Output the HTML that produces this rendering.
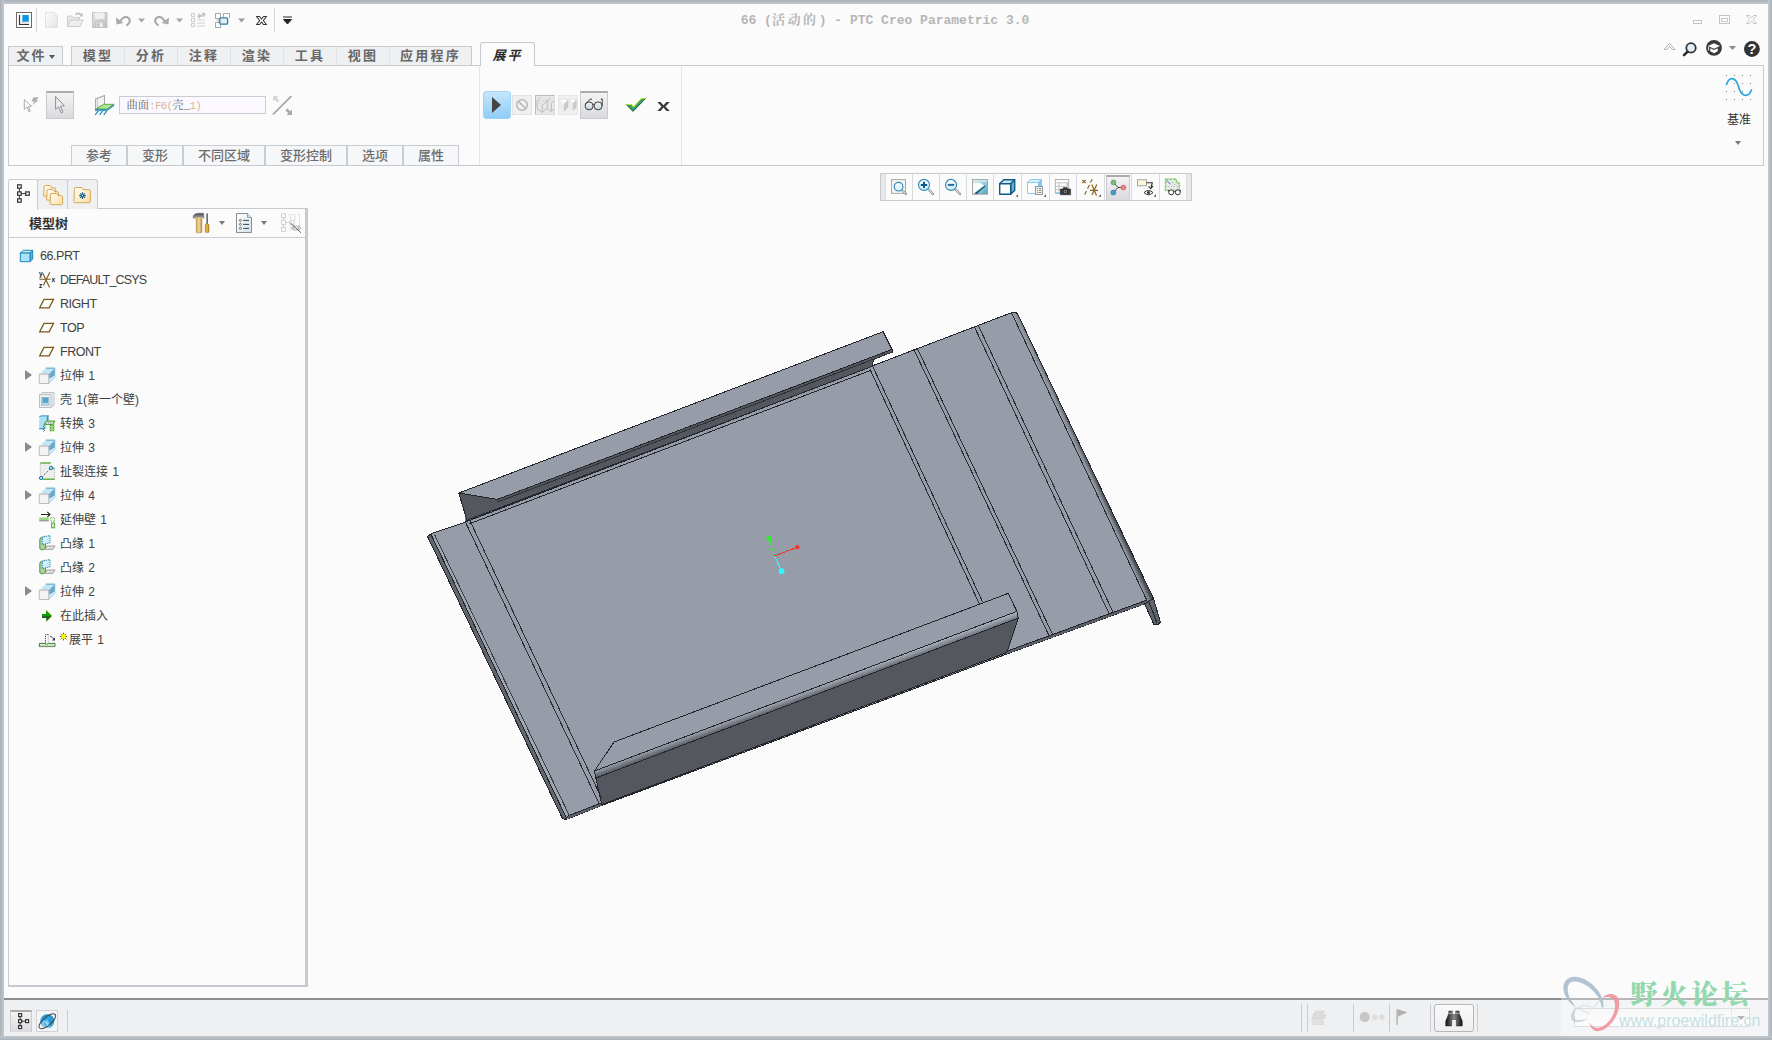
<!DOCTYPE html>
<html lang="zh-CN">
<head>
<meta charset="utf-8">
<title>66 (活动的) - PTC Creo Parametric 3.0</title>
<style>
*{box-sizing:border-box;margin:0;padding:0}
html,body{width:1772px;height:1040px;overflow:hidden;background:#fbfbfb}
body{font-family:"Liberation Sans","Noto Sans CJK SC",sans-serif;font-size:12px;color:#3c3c3c;position:relative}
.abs{position:absolute}
svg{position:absolute;overflow:visible}
/* window frame */
#frame-t{left:0;top:0;width:1772px;height:4px;background:linear-gradient(#a9b1b9,#c3c9ce)}
#frame-l{left:0;top:0;width:4px;height:1040px;background:linear-gradient(90deg,#a9b1b9,#c3c9ce)}
#frame-r{left:1768px;top:0;width:4px;height:1040px;background:linear-gradient(90deg,#c3c9ce,#a9b1b9)}
#frame-b{left:0;top:1036px;width:1772px;height:4px;background:linear-gradient(#c3c9ce,#a9b1b9)}
/* title */
#title{left:735px;top:13px;width:300px;height:16px;line-height:16px;font-family:"Liberation Mono","Noto Serif CJK SC",monospace;font-size:13px;font-weight:700;color:#b6b6b6;white-space:pre;text-align:center}
.vsep{width:1px;background:#c9cdd2}
/* main tabs */
.tab{top:46px;height:20px;background:#eef0f2;border:1px solid #c5cad0;border-bottom:none;font-family:"Noto Sans CJK SC","Liberation Sans",sans-serif;font-size:13px;font-weight:700;color:#676767;letter-spacing:2.2px;padding-left:0;text-align:center;line-height:15px;white-space:nowrap}
.m{border-right-color:#dfe2e6}
.m+.m{border-left-color:#dfe2e6}
#tab-active{left:480px;top:42px;width:55px;height:24px;background:#fbfbfb;border:1px solid #c5cad0;border-bottom:none;border-radius:3px 3px 0 0;font-family:"Noto Sans CJK SC",sans-serif;font-size:13px;font-weight:700;font-style:italic;color:#2a2a2a;letter-spacing:2px;text-align:center;line-height:24px;z-index:3}
/* ribbon */
#ribbon{left:8px;top:65px;width:1756px;height:101px;border:1px solid #c5cad0;background:#fbfbfb}
.subtab{top:145px;height:20px;background:#f6f7f8;border:1px solid #c9cdd2;border-bottom:none;font-family:"Noto Sans CJK SC",sans-serif;font-size:13px;font-weight:500;color:#6c6c6c;text-align:center;line-height:18px;white-space:nowrap}
.pressed{background:linear-gradient(#f3f3f4,#d9dbde);border:1px solid #c9cbce;border-top:2px solid #a9abad}
/* tree */
#tree{left:8px;top:208px;width:300px;height:779px;border:1px solid #c5cad0;border-right:3px solid #c5cad0;border-bottom:2px solid #c5cad0;background:#fbfbfb}
.ttab{top:179px;height:30px;width:30px;border:1px solid #c9cdd2;border-bottom:none;background:#eef0f2;border-radius:3px 3px 0 0}
.row{left:60px;height:24px;line-height:24px;font-size:12.5px;letter-spacing:-0.45px;color:#404040;white-space:nowrap}
.row.cn{word-spacing:1px;font-family:"Liberation Sans","Noto Sans CJK SC",sans-serif;font-size:12px;letter-spacing:0}
.exp{left:25px;width:0;height:0;border-left:7px solid #8a8a8a;border-top:5px solid transparent;border-bottom:5px solid transparent}
/* status */
#status{left:4px;top:998px;width:1764px;height:38px;background:#eef0f2;border-top:2px solid #8c8c8c}
/* view toolbar */
#vtb{left:880px;top:173px;width:312px;height:28px;border:1px solid #c5cad0;background:#fbfbfb}
</style>
</head>
<body>
<!--FRAME-->
<div class="abs" id="frame-t"></div><div class="abs" id="frame-l"></div><div class="abs" id="frame-r"></div><div class="abs" id="frame-b"></div>
<div class="abs" id="title">66 (<span style="letter-spacing:2.6px">活动的</span>) - PTC Creo Parametric 3.0</div>
<svg id="qat" class="abs" style="left:0;top:0" width="700" height="40" viewBox="0 0 700 40">
<defs>
<linearGradient id="gpage" x1="0" y1="0" x2="1" y2="1"><stop offset="0" stop-color="#fdfdfd"/><stop offset="1" stop-color="#e3e3e3"/></linearGradient>
<linearGradient id="gsave" x1="0" y1="0" x2="1" y2="1"><stop offset="0" stop-color="#e6e6e6"/><stop offset="1" stop-color="#bdbdbd"/></linearGradient>
</defs>
<!-- app icon -->
<rect x="16.5" y="12.5" width="15" height="15" fill="#fff" stroke="#6a6a6a"/>
<path d="M19.5,15 V24.5 H29" fill="none" stroke="#333" stroke-width="1.2"/>
<rect x="20.2" y="21.5" width="8.5" height="2.5" fill="#e6e2dc"/>
<rect x="22.3" y="15" width="6.5" height="6.7" fill="#0a96e0"/>
<rect x="36" y="8" width="1" height="24" fill="#d2d5d9"/>
<!-- new -->
<path d="M45.5,12.5 H54 L57.5,16 V27.5 H45.5 Z" fill="url(#gpage)" stroke="#e2e2e2"/>
<path d="M54,12.5 V16 H57.5" fill="#f4f4f4" stroke="#dedede" stroke-width=".8"/>
<!-- open -->
<path d="M67.5,26.5 V16 H72 L73.5,17.5 H79.5 V20" fill="#e9e9e9" stroke="#cfcfcf"/>
<path d="M67.5,26.5 L70.5,20 H83 L80,26.5 Z" fill="#efefef" stroke="#c9c9c9"/>
<path d="M75.5,14.5 Q79,12 81.5,15.5" fill="none" stroke="#bdbdbd" stroke-width="1.6"/>
<path d="M79.5,16.5 H82.8 V13 Z" fill="#bdbdbd"/>
<!-- save -->
<path d="M92.5,12.5 H107 V27.5 H92.5 Z" fill="url(#gsave)" stroke="#c4c4c4"/>
<rect x="95" y="12.5" width="9.5" height="6.5" fill="#f0f0f0"/>
<rect x="96" y="22" width="7.5" height="5.5" fill="#e9e9e9" stroke="#bdbdbd" stroke-width=".8"/>
<rect x="97.3" y="23.3" width="1.8" height="3.4" fill="#b5b5b5"/>
<!-- undo -->
<path d="M119.5,22.5 Q124,14 129,18.5 Q131.500,22 126.500,25.500" fill="none" stroke="#a9a9a9" stroke-width="2.2"/>
<path d="M116,17.5 L116.500,24.500 L123.500,23 Z" fill="#a9a9a9"/>
<path d="M138,18.500 H145 L141.500,22.500 Z" fill="#a6a6a6"/>
<!-- redo -->
<path d="M165.500,22.500 Q161,14 156,18.500 Q153.500,22 158.500,25.500" fill="none" stroke="#a9a9a9" stroke-width="2.2"/>
<path d="M169,17.500 L168.500,24.500 L161.500,23 Z" fill="#a9a9a9"/>
<path d="M176,18.500 H183 L179.500,22.500 Z" fill="#a6a6a6"/>
<!-- regen -->
<g fill="#fdfdfd" stroke="#cdcdcd"><rect x="191.500" y="13.500" width="3" height="3"/><rect x="191.500" y="18.500" width="3" height="3"/><rect x="191.500" y="23.500" width="3" height="3"/></g>
<path d="M197,20 H205 M197,23 H205 M197,26 H205" stroke="#d2d2d2" stroke-width="1"/>
<path d="M197,16 L200,13 V15 H202 V17 H200 V19 Z" fill="#c4c4c4"/>
<path d="M206,14.500 L203,11.500 V13.500 H201.500 V15.500 H203 V17.500 Z" fill="#c4c4c4"/>
<!-- windows -->
<g fill="#fcfcfc" stroke="#a9a9a9"><rect x="215.500" y="13.500" width="5" height="5"/><rect x="215.500" y="22.500" width="5" height="5"/><path d="M223.500,17 V13.500 H229.500 V18" fill="none"/></g>
<path d="M218,18.500 V22.500" stroke="#a9a9a9"/>
<rect x="219.800" y="17.800" width="7.800" height="6.400" rx="1.200" fill="#e4eef5" stroke="#2f7fa6" stroke-width="1.300"/>
<path d="M238,18.500 H245 L241.500,22.500 Z" fill="#9c9c9c"/>
<!-- close x -->
<path d="M256.500,16.500 H259.500 L261.500,19 L263.500,16.500 H266.500 L263.300,20.500 L266.500,24.500 H263.500 L261.500,22 L259.500,24.500 H256.500 L259.700,20.500 Z" fill="#fafafa" stroke="#333" stroke-width="1.100" stroke-linejoin="round"/>
<rect x="274" y="8" width="1" height="24" fill="#d2d5d9"/>
<path d="M283,17 H292 M283.500,19.500 H291.500 L287.500,24 Z" stroke="#222" stroke-width="1" fill="#222"/>
</svg>

<div class="abs tab" style="left:8px;width:55px;letter-spacing:2px;padding-right:8px;padding-left:0">文件<span class="abs" style="left:39.5px;top:8px;width:0;height:0;border-top:4px solid #555;border-left:3.5px solid transparent;border-right:3.5px solid transparent"></span></div>
<div class="abs tab m" style="left:71px;width:54px">模型</div>
<div class="abs tab m" style="left:124px;width:54px">分析</div>
<div class="abs tab m" style="left:177px;width:54px">注释</div>
<div class="abs tab m" style="left:230px;width:54px">渲染</div>
<div class="abs tab m" style="left:283px;width:54px">工具</div>
<div class="abs tab m" style="left:336px;width:54px">视图</div>
<div class="abs tab m" style="left:389px;width:83px;border-right-color:#c5cad0">应用程序</div>
<div class="abs" id="tab-active">展平</div>

<div class="abs" id="ribbon"></div>
<div class="abs vsep" style="left:479px;top:66px;height:99px;background:#e3e5e8"></div>
<div class="abs vsep" style="left:681px;top:66px;height:99px;background:#e3e5e8"></div>
<div class="abs pressed" style="left:46px;top:91px;width:28px;height:28px"></div>
<div class="abs" style="left:119px;top:96px;width:147px;height:18px;border:1px solid #c9cdd2;background:#fbf9ff;font-family:'Liberation Mono','Noto Serif CJK SC',monospace;font-size:11px;line-height:16px;padding:1px 0 0 6.500px;color:#666;white-space:nowrap;letter-spacing:-0.800px"><span style="letter-spacing:0;font-size:11.300px">曲面</span><span style="color:#dcb493">:F6(</span><span style="letter-spacing:0;font-size:11.300px">壳</span><span style="color:#777">_</span><span style="color:#dcb493">1)</span></div>
<div class="abs subtab" style="left:71px;width:56px">参考</div>
<div class="abs subtab" style="left:127px;width:56px">变形</div>
<div class="abs subtab" style="left:183px;width:82px">不同区域</div>
<div class="abs subtab" style="left:265px;width:82px">变形控制</div>
<div class="abs subtab" style="left:347px;width:56px">选项</div>
<div class="abs subtab" style="left:403px;width:56px">属性</div>
<div class="abs" style="left:483px;top:91px;width:28px;height:28px;border-radius:3px;background:linear-gradient(#c5e6fb,#8fcdf6);border:1px solid #9fd3f5"></div>
<div class="abs" style="left:492px;top:97px;width:0;height:0;border-left:9px solid #444;border-top:8px solid transparent;border-bottom:8px solid transparent"></div>
<div class="abs" style="left:512px;top:95px;width:20px;height:20px;background:#f0f0f0;border:1px solid #e2e2e2"></div>
<div class="abs" style="left:535px;top:95px;width:20px;height:20px;background:#e8e8e8;border:1px solid #dcdcdc;border-top-color:#bcbcbc;border-left-color:#bcbcbc"></div>
<div class="abs" style="left:558px;top:95px;width:20px;height:20px;background:#f0f0f0;border:1px solid #e6e6e6"></div>
<div class="abs pressed" style="left:580px;top:91px;width:28px;height:28px"></div>
<div class="abs" style="left:1726px;top:111px;width:26px;height:16px;line-height:16px;font-size:12px;text-align:center;color:#333;font-family:'Noto Sans CJK SC',sans-serif;white-space:nowrap">基准</div>
<div class="abs" style="left:1735px;top:141px;width:0;height:0;border-top:4px solid #777;border-left:3.5px solid transparent;border-right:3.5px solid transparent"></div>

<svg id="ribicons" class="abs" style="left:0;top:0" width="1772" height="170" viewBox="0 0 1772 170">
<defs>
<linearGradient id="glens" x1="0" y1="0" x2="0" y2="1"><stop offset="0" stop-color="#f4f6f7"/><stop offset="1" stop-color="#bcd3de"/></linearGradient>
</defs>
<!-- window controls -->
<rect x="1693.500" y="20.500" width="8" height="3" fill="#fdfdfd" stroke="#c4c4c4"/>
<rect x="1719.500" y="15.500" width="10" height="8" fill="#fdfdfd" stroke="#c4c4c4"/>
<rect x="1721.500" y="18.500" width="6" height="3" fill="#fdfdfd" stroke="#c9c9c9"/>
<path d="M1746.500,15.500 H1749.500 L1751.500,18 L1753.500,15.500 H1756.500 L1753.300,19.500 L1756.500,23.500 H1753.500 L1751.500,21 L1749.500,23.500 H1746.500 L1749.700,19.500 Z" fill="#fdfdfd" stroke="#c6c6c6" stroke-linejoin="round"/>
<!-- help icons -->
<path d="M1664,49.500 L1669.500,43.300 L1675,49.500 H1672.300 L1669.500,46.400 L1666.700,49.500 Z" fill="#fff" stroke="#a9a9a9" stroke-width=".9" stroke-linejoin="round"/>
<circle cx="1691" cy="47.900" r="4.700" fill="#e4eef7" stroke="#333" stroke-width="1.800"/>
<path d="M1687.600,51.600 L1684,55.200" stroke="#2a2a2a" stroke-width="2.600" stroke-linecap="round"/>
<circle cx="1714" cy="47.900" r="7.900" fill="#3a3a3a"/>
<path d="M1708,46 L1714,43.300 L1720,46 L1714,48.700 Z" fill="#fff"/>
<path d="M1710.300,48.300 V51.300 L1714,53.200 L1717.700,51.300 V48.300 L1714,50 Z" fill="#fff"/>
<path d="M1708.600,46.500 V50.500" stroke="#fff" stroke-width=".9"/>
<path d="M1729,46 H1736 L1732.500,50 Z" fill="#8a8a8a"/>
<circle cx="1751.900" cy="49" r="7.900" fill="#333"/>
<text x="1751.900" y="54.300" font-family="Liberation Sans,sans-serif" font-weight="700" font-size="14.500" fill="#fff" text-anchor="middle">?</text>
<!-- datum sine icon -->
<g fill="#777"><circle cx="1726.500" cy="75.500" r=".6"/><circle cx="1734.500" cy="75.500" r=".6"/><circle cx="1742.500" cy="75.500" r=".6"/><circle cx="1750.500" cy="75.500" r=".6"/>
<circle cx="1726.500" cy="83.500" r=".6"/><circle cx="1734.500" cy="83.500" r=".6"/><circle cx="1742.500" cy="83.500" r=".6"/><circle cx="1750.500" cy="83.500" r=".6"/>
<circle cx="1726.500" cy="91.500" r=".6"/><circle cx="1734.500" cy="91.500" r=".6"/><circle cx="1742.500" cy="91.500" r=".6"/><circle cx="1750.500" cy="91.500" r=".6"/>
<circle cx="1726.500" cy="99.500" r=".6"/><circle cx="1734.500" cy="99.500" r=".6"/><circle cx="1742.500" cy="99.500" r=".6"/><circle cx="1750.500" cy="99.500" r=".6"/></g>
<path d="M1726.500,84.500 C1729,76.500 1735,76.500 1738,85 C1741,97 1748,98.500 1751.500,90" fill="none" stroke="#2ea5dc" stroke-width="1.700" stroke-linecap="round"/>
<!-- lightning select -->
<path d="M24.300,99.500 V109.300 L27,107 L29,111.800 L30.300,111.200 L28.400,106.600 L31.400,106.300 Z" fill="#fdfdfd" stroke="#a4a4a4" stroke-width=".9" stroke-linejoin="round"/>
<path d="M33.500,97.200 H39 L36.200,100.300 H38.800 L32.300,104.900 L34.400,101.500 H31.300 Z" fill="#b0b0b0"/>
<!-- cursor -->
<path d="M55.600,96.500 V109.300 L58.600,106.800 L61.200,112.900 L63,112.100 L60.500,106.200 L64.400,105.800 Z" fill="#ececee" stroke="#8e8e8e" stroke-width="1" stroke-linejoin="round"/>
<!-- green plane icon -->
<path d="M95.500,109 V99 L104.500,95.400 V104" fill="#f2f2f2" stroke="#a9a9a9" stroke-width="1.100" stroke-linejoin="round"/>
<path d="M97.500,108 V98.500" stroke="#bdbdbd" stroke-width=".8"/>
<path d="M95.700,108.900 L103.800,104.300 H113.800 L106.900,109.200 Z" fill="#a9e88c" stroke="#5f9e4c" stroke-width=".9" stroke-linejoin="round"/>
<path d="M95.400,109.500 H106.900 L113.800,104.800 V105.800 L107,110.700 H95.400 Z" fill="#a4e3f7" stroke="#0d6f9d" stroke-width=".7"/>
<path d="M98.200,111 L95.200,114.800 M102.600,111 L99.600,114.800 M106.800,111 L103.800,114.800" stroke="#1486bd" stroke-width="1.200"/>
<!-- flip icon -->
<path d="M273,114.500 L291.500,96" stroke="#a2a2a2" stroke-width="1.700"/>
<path d="M273,96 H278.500 L276.700,97.800 L279.500,100.600 L277.600,102.500 L274.800,99.700 L273,101.500 Z" fill="#d6d6d6"/>
<path d="M292,115 H286.500 L288.300,113.200 L285.500,110.400 L287.400,108.500 L290.200,111.300 L292,109.500 Z" fill="#a9a9a9"/>
<!-- stop -->
<circle cx="522" cy="104.900" r="5.300" fill="none" stroke="#b2b2b2" stroke-width="1.400"/>
<path d="M518.300,101.200 L525.700,108.600" stroke="#b2b2b2" stroke-width="1.400"/>
<!-- wire boxes -->
<g fill="none" stroke="#b3b3b3" stroke-width=".9"><path d="M537.200,100.500 V108.400 L541.900,112.600 M537.200,100.500 L540.500,97.200 M542.300,105.400 V112.300 M542.300,105.400 L550.600,97.200 M547.200,100.500 V108.400 L542,112.500 M547.200,108.400 L550.600,111.500 M551.300,103.600 V111.500 L553.700,109.200 M551.300,103.600 L553.700,101"/><path d="M537.200,100.500 L542.300,105.400 M537.200,100.500 H547.200 M544,97.500 L551.300,103.600 M547.200,100.500 H553.500" stroke="#d2d2d2" stroke-width=".7"/></g>
<!-- solid boxes -->
<path d="M559.100,99.300 H568.400 L563.900,103.900 Z M569.200,99.300 H576.600 L572.900,103.300 Z" fill="#fdfdfd"/>
<path d="M559.100,99.300 L563.900,103.900 V111.800 L559.100,107.200 Z M569.200,99.300 L572.900,103.300 V110.900 L569.200,107.200 Z" fill="#ececec"/>
<path d="M563.900,103.900 L568.400,99.300 V107.200 L563.900,111.800 Z M572.900,103.300 L576.600,99.300 V107.200 L572.900,110.900 Z" fill="#cacaca"/>
<path d="M559.100,99 H568.400 M569.200,99 H576.600" stroke="#dcdcdc" stroke-width=".8"/>
<!-- glasses -->
<circle cx="589.100" cy="105.900" r="4" fill="url(#glens)" stroke="#3c3c3c" stroke-width="1"/>
<circle cx="598.100" cy="105.900" r="4" fill="url(#glens)" stroke="#3c3c3c" stroke-width="1"/>
<path d="M593.200,105 Q593.600,104 594,105" fill="none" stroke="#333" stroke-width="1"/>
<path d="M585.300,104.500 L590.500,98.800 L592,99.600 M602.200,105.500 V98.800 L600.800,99.200" fill="none" stroke="#3c3c3c" stroke-width="1"/>
<!-- check -->
<path d="M626.100,104.200 H631.700 L633.400,106.900 L641.200,98.300 H645.700 L633,111.600 Z" fill="#2f9f72"/>
<path d="M626.100,104.500 H631.600 L633.400,107.300 L641.300,98.600 H645.400" fill="none" stroke="#c9f000" stroke-width=".9"/>
<path d="M626.300,104.600 L633,111.400 L645.500,98.500" fill="none" stroke="#0c3d0c" stroke-width=".8"/>
<!-- X -->
<path d="M657.300,102 H660.600 L663.500,105.200 L666.400,102 H669.800 L665.500,106.400 L669.800,111 H666.400 L663.500,107.600 L660.600,111 H657.300 L661.500,106.400 Z" fill="#3a3a3a"/>
</svg>
<div class="abs" id="tree"></div>
<div class="abs" style="left:9px;top:237px;width:296px;height:1px;background:#c9cdd2"></div>
<div class="abs ttab" style="left:8px;background:#fbfbfb;height:31px;z-index:2"></div><div class="abs ttab" style="left:37px;width:31px"></div><div class="abs ttab" style="left:67px;width:31px"></div>
<div class="abs" style="left:29px;top:214px;height:18px;line-height:18px;font-family:'Noto Sans CJK SC',sans-serif;font-weight:700;font-size:13px;color:#333;white-space:nowrap">模型树</div>
<div class="abs row" style="left:40px;top:244px">66.PRT</div>
<div class="abs row" style="left:60px;top:268px;letter-spacing:-0.85px">DEFAULT_CSYS</div>
<div class="abs row" style="left:60px;top:292px">RIGHT</div>
<div class="abs row" style="left:60px;top:316px">TOP</div>
<div class="abs row" style="left:60px;top:340px">FRONT</div>
<div class="abs exp" style="top:370px"></div><div class="abs row cn" style="left:60px;top:364px">拉伸 1</div>
<div class="abs row cn" style="left:60px;top:388px">壳 1(第一个壁)</div>
<div class="abs row cn" style="left:60px;top:412px">转换 3</div>
<div class="abs exp" style="top:442px"></div><div class="abs row cn" style="left:60px;top:436px">拉伸 3</div>
<div class="abs row cn" style="left:60px;top:460px">扯裂连接 1</div>
<div class="abs exp" style="top:490px"></div><div class="abs row cn" style="left:60px;top:484px">拉伸 4</div>
<div class="abs row cn" style="left:60px;top:508px">延伸壁 1</div>
<div class="abs row cn" style="left:60px;top:532px">凸缘 1</div>
<div class="abs row cn" style="left:60px;top:556px">凸缘 2</div>
<div class="abs exp" style="top:586px"></div><div class="abs row cn" style="left:60px;top:580px">拉伸 2</div>
<div class="abs row cn" style="left:60px;top:604px">在此插入</div>
<div class="abs row cn" style="left:69px;top:628px">展平 1</div>
<div class="abs" style="left:219px;top:221px;width:0;height:0;border-top:4px solid #777;border-left:3.5px solid transparent;border-right:3.5px solid transparent"></div>
<div class="abs" style="left:261px;top:221px;width:0;height:0;border-top:4px solid #777;border-left:3.5px solid transparent;border-right:3.5px solid transparent"></div>

<div class="abs" id="vtb"></div>
<div class="abs" style="left:881px;top:174px;width:5px;height:26px;background:#e6e8ea"></div><div class="abs" style="left:1186px;top:174px;width:5px;height:26px;background:#e6e8ea"></div>
<div class="abs vsep" style="left:885px;top:174px;height:26px;background:#d9dcdf"></div><div class="abs vsep" style="left:912px;top:174px;height:26px;background:#d9dcdf"></div><div class="abs vsep" style="left:939px;top:174px;height:26px;background:#d9dcdf"></div><div class="abs vsep" style="left:966px;top:174px;height:26px;background:#d9dcdf"></div><div class="abs vsep" style="left:993px;top:174px;height:26px;background:#d9dcdf"></div><div class="abs vsep" style="left:1021px;top:174px;height:26px;background:#d9dcdf"></div><div class="abs vsep" style="left:1049px;top:174px;height:26px;background:#d9dcdf"></div><div class="abs vsep" style="left:1076px;top:174px;height:26px;background:#d9dcdf"></div><div class="abs vsep" style="left:1104px;top:174px;height:26px;background:#d9dcdf"></div><div class="abs vsep" style="left:1131px;top:174px;height:26px;background:#d9dcdf"></div><div class="abs vsep" style="left:1159px;top:174px;height:26px;background:#d9dcdf"></div><div class="abs vsep" style="left:1186px;top:174px;height:26px;background:#d9dcdf"></div>
<div class="abs pressed" style="left:1106px;top:175px;width:24px;height:25px;border-bottom:none"></div>
<svg id="vtbicons" class="abs" style="left:870px;top:170px" width="330" height="36" viewBox="870 170 330 36">
<defs>
<linearGradient id="gteal" x1="0" y1="0" x2="1" y2="1"><stop offset="0" stop-color="#e8f6fa"/><stop offset="1" stop-color="#4fa6c0"/></linearGradient>
<linearGradient id="glens2" x1="0" y1="0" x2="0" y2="1"><stop offset="0" stop-color="#ffffff"/><stop offset="1" stop-color="#cfeaf6"/></linearGradient>
</defs>
<!-- refit -->
<rect x="891.500" y="179.600" width="14" height="13.800" fill="#f3f3f3" stroke="#a9a9a9" stroke-width="1"/>
<path d="M901.800,190 L906,194" stroke="#9a9a9a" stroke-width="2.400" stroke-linecap="round"/><path d="M901.800,190 L905.700,193.700" stroke="#e2e2e2" stroke-width="1"/>
<circle cx="898.600" cy="186.700" r="4.300" fill="url(#glens2)" stroke="#2a8ab5" stroke-width="1.100"/>
<!-- zoom in -->
<path d="M928.200,189.200 L933,194" stroke="#9a9a9a" stroke-width="2.400" stroke-linecap="round"/><path d="M928.200,189.200 L932.700,193.700" stroke="#e6e6e6" stroke-width="1"/>
<circle cx="924" cy="184.900" r="5.500" fill="url(#glens2)" stroke="#2a8ab5" stroke-width="1.100"/>
<path d="M920.800,184.900 H927.200 M924,181.700 V188.100" stroke="#0b5c8c" stroke-width="2"/>
<!-- zoom out -->
<path d="M955.200,189.200 L960,194" stroke="#9a9a9a" stroke-width="2.400" stroke-linecap="round"/><path d="M955.200,189.200 L959.700,193.700" stroke="#e6e6e6" stroke-width="1"/>
<circle cx="951" cy="184.900" r="5.500" fill="url(#glens2)" stroke="#2a8ab5" stroke-width="1.100"/>
<path d="M947.800,184.900 H954.200" stroke="#1b76a8" stroke-width="2"/>
<!-- repaint -->
<rect x="972.500" y="179.600" width="15" height="14.600" fill="url(#gteal)" stroke="#a4a4a4" stroke-width="1"/>
<path d="M973,183.500 Q980,181 984.500,186 L973,193.700 Z" fill="#f6fbfc"/>
<path d="M973,180.100 H987 V181.600 H973 Z" fill="#cfeaf2"/>
<path d="M975.500,193.600 L985,186" stroke="#0e5678" stroke-width="1.400"/><path d="M975,193.800 L979,192 L977.500,193.800 Z" fill="#0e5678"/>
<!-- cube -->
<g stroke="#0d5c88" stroke-width="1.400" stroke-linejoin="round"><path d="M999.700,183.800 L1003.700,179.700 H1014.700 L1010.700,183.800 Z" fill="#c9e9f5"/><path d="M1010.700,183.800 L1014.700,179.700 V190.300 L1010.700,194.300 Z" fill="#6fb2d0"/><rect x="999.700" y="183.800" width="11" height="10.500" fill="#fdfdfd"/></g>
<path d="M1018,194.300 V196.800 H1015.500 Z" fill="#555"/>
<!-- cube+doc -->
<g stroke="#8ccbea" stroke-width="1" stroke-linejoin="round"><path d="M1027.500,182.500 L1030.500,179.500 H1041.500 L1038.500,182.500 Z" fill="#d8f0fa"/><path d="M1038.500,182.500 L1041.500,179.500 V190.500 L1038.500,193.500 Z" fill="#7fc4e6"/><rect x="1027.500" y="182.500" width="11" height="11" fill="#fdfdfd"/></g>
<rect x="1035.500" y="186.500" width="7" height="8" fill="#f2f2f2" stroke="#8e8e8e" stroke-width=".9"/>
<path d="M1037,188.500 h1 M1037,190.500 h1 M1037,192.500 h1 M1038.800,188.500 h2.400 M1038.800,190.500 h2.400 M1038.800,192.500 h2.400" stroke="#666" stroke-width=".8"/>
<path d="M1046,194.300 V196.800 H1043.500 Z" fill="#555"/>
<!-- table+camera -->
<rect x="1055.300" y="179.600" width="13.400" height="13.800" fill="#fdfdfd" stroke="#a9a9a9" stroke-width=".9"/>
<path d="M1055.300,182.800 H1068.700 M1055.300,186.300 H1068.700 M1055.300,189.800 H1062 M1059,182.800 V193.400" stroke="#b4b4b4" stroke-width=".8"/>
<path d="M1067.200,182.800 V186.300" stroke="#8ccbea" stroke-width="1.400"/><path d="M1055.300,192.800 H1061" stroke="#8ccbea" stroke-width="1.300"/>
<path d="M1060.300,189 H1062.600 L1063.400,187.600 H1067.200 L1068,189 H1070.600 V194.800 H1060.300 Z" fill="#3a3a3a" stroke="#222" stroke-width=".5"/>
<circle cx="1065.300" cy="191.600" r="2.300" fill="#8a8a8a" stroke="#111" stroke-width=".8"/><circle cx="1065.300" cy="191.600" r=".9" fill="#333"/>
<!-- datum display -->
<g stroke="#8a6420" stroke-width="1.200" fill="none"><path d="M1082.300,179.800 L1085.700,183.200 M1085.700,179.800 L1082.300,183.200 M1092.300,179.300 L1090.300,182.500 M1089.500,185 L1087.500,188.500 M1086.500,191 L1084.700,194.500"/><path d="M1090,190.300 H1098 M1091.800,184.500 L1096.500,195.500 M1096.800,184.500 L1092,195"/></g>
<path d="M1101,194.300 V196.800 H1098.500 Z" fill="#555"/>
<!-- spin center -->
<path d="M1113.500,182.400 L1118,187.500 L1113.300,192.600 M1118,187.500 H1123.400" fill="none" stroke="#444" stroke-width="1"/>
<circle cx="1113.500" cy="182.400" r="2.500" fill="#7fb77f" stroke="#5d9a5d" stroke-width=".6"/>
<circle cx="1123.400" cy="187.500" r="2.500" fill="#ea7f7f" stroke="#cf5f5f" stroke-width=".6"/>
<circle cx="1113.300" cy="192.600" r="2.500" fill="#4a96c4" stroke="#2f7aa8" stroke-width=".6"/>
<!-- annotation display -->
<rect x="1137.500" y="179.800" width="9" height="6" fill="#fdf5dc" stroke="#9a9a9a" stroke-width=".9"/>
<path d="M1146.500,182.700 H1152.300 L1151,187.500" fill="none" stroke="#333" stroke-width="1.100"/><path d="M1148.500,186.300 L1150.800,188.600 L1153,185.800" fill="none" stroke="#333" stroke-width="1.100"/>
<path d="M1144,192.600 Q1148.500,188.300 1153,192.600 Q1148.500,196.900 1144,192.600 Z" fill="#fdfdfd" stroke="#333" stroke-width="1"/><circle cx="1148.500" cy="192.600" r="1.500" fill="#333"/>
<path d="M1156,194.300 V196.800 H1153.500 Z" fill="#555"/>
<!-- appearance/glasses -->
<path d="M1165.500,179.300 H1176.500 V183 H1179.300 V190.500 H1165.500 Z" fill="#e9e9e9" stroke="#7fcf5f" stroke-width="1.500" stroke-linejoin="round" stroke-dasharray="3,.8"/>
<path d="M1166.500,180.300 L1170.500,184.300" stroke="#1b76a8" stroke-width="1"/>
<g fill="#3f8f2f"><circle cx="1169" cy="186.500" r=".45"/><circle cx="1171.500" cy="186.500" r=".45"/><circle cx="1174" cy="186.500" r=".45"/><circle cx="1172.500" cy="182.500" r=".45"/><circle cx="1175" cy="184.500" r=".45"/><circle cx="1177" cy="186.500" r=".45"/></g>
<circle cx="1171.200" cy="192.300" r="2.500" fill="#fdfdfd" stroke="#333" stroke-width="1"/><circle cx="1177.800" cy="192.300" r="2.500" fill="#fdfdfd" stroke="#333" stroke-width="1"/>
<path d="M1173.700,191.800 Q1174.500,191 1175.300,191.800 M1168.700,191.500 L1168.300,190 M1180.300,191.500 L1180.700,190" fill="none" stroke="#333" stroke-width=".9"/>
</svg>
<svg id="model" class="abs" style="left:0;top:0" width="1772" height="1040" viewBox="0 0 1772 1040" shape-rendering="crispEdges">
<defs>
<linearGradient id="gbend" gradientUnits="userSpaceOnUse" x1="800" y1="693" x2="802.6" y2="700"><stop offset="0" stop-color="#a9afba"/><stop offset="1" stop-color="#5d6168"/></linearGradient>
<linearGradient id="gredge" gradientUnits="userSpaceOnUse" x1="1076.2" y1="450" x2="1081.6" y2="447.5"><stop offset="0" stop-color="#969ca8"/><stop offset=".35" stop-color="#8d939e"/><stop offset="1" stop-color="#474b52"/></linearGradient>
</defs>
<g stroke="#23252a" stroke-width="1" stroke-linejoin="round">
<path d="M465,523.5 L465,512 L872,357 L873.5,367 Z" fill="#7a7f89" stroke="none"/>
<!-- main plate -->
<path d="M427.5,536.5 L431,533.8 L465.6,522 L872.5,365.8 L1011.5,312.7 L1014,312 L1016.3,312.7 L1018,314.8 L1153.5,598.5 L1160.4,622 L1158.5,624.3 L1154,624.6 L1144.5,603.8 L1006.8,654 L601.7,805.5 L568,818.8 L564.5,819.4 L562,817.5 Z" fill="#969ca8"/>
<!-- left thickness strip -->
<path d="M427.5,536.5 L431,533.8 L434.6,534.7 L569.8,816.6 L568,818.8 L564.5,819.4 L562,817.5 Z" fill="#a0a6b2" stroke="none"/>
<path d="M427.5,536.5 L431,533.8 L431.6,535.6 L566.6,818.4 L564.5,819.4 L562,817.5 Z" fill="#62666e"/>
<!-- bottom thin edges -->
<path d="M568,818.8 L601.7,805.5 L600.8,803.2 L567,816.3 Z" fill="#5c6068" stroke="none"/><path d="M567,816.3 L600.8,803.2" fill="none"/>
<path d="M1006.8,654 L1144.5,603.8 L1153.5,598.5 L1152.5,596.600 L1143.8,601.200 L1006.3,651.400 Z" fill="#5c6068" stroke="none"/><path d="M1006.3,651.400 L1143.8,601.200 L1152.5,596.600" fill="none"/>
<!-- right rounded edge -->
<path d="M1011.5,312.7 L1014,312 L1016.3,312.7 L1018,314.800 L1153.5,598.5 L1147,600.7 Z" fill="url(#gredge)" stroke="none"/>
<path d="M1011.5,312.7 L1014,312 L1016.3,312.7 L1018,314.800 L1153.500,598.500" fill="none"/>
<!-- hook -->
<path d="M1153.5,598.5 L1160.4,622 L1158.5,624.3 L1154,624.6 L1144.5,603.8 Z" fill="#5f636b"/>
<path d="M1149,602 L1157,623" fill="none"/>
<!-- top flange -->
<path d="M458.8,493 L462,491.800 L883.1,331.700 L892,349.400 L892.5,352 L873.8,359.400 L872,366.400 L466.9,520.300 Z" fill="#54585e"/>
<path d="M458.8,493 L462,491.800 L883.1,331.700 L892,349.400 L497.5,499.400 Z" fill="#969ca8"/>
<path d="M497.5,502 L892.5,352" fill="none" stroke="#2e3035"/>
<path d="M469.5,523.800 L870,370.600" fill="none"/>
<!-- bottom flange -->
<path d="M594.5,771 L614,742 L1008.2,593.4 L1016.9,611.4 Z" fill="#969ca8"/>
<path d="M594.5,771 L1016.9,611.4 L1018.3,618 L595.9,778 Z" fill="url(#gbend)" stroke="none"/>
<path d="M595.9,778 L1018.3,618 L1006.8,652.5 L601.7,804.5 Z" fill="#54585e"/>
<path d="M594.5,771 L1016.9,611.4" fill="none"/>
<path d="M594.5,771 L595.9,778" fill="none"/>
<path d="M1016.9,611.4 L1018.3,618" fill="none"/>
<!-- bend lines -->
<g fill="none" stroke="#2a2c31">
<path d="M434.6,534.7 L569.8,816.6" stroke="#3a3d43"/>
<path d="M465.6,522.5 L599.5,804.5"/>
<path d="M470,521 L601.5,798"/>
<path d="M869.6,368.5 L979.3,603.8"/>
<path d="M872.7,366.3 L982.8,602.3"/>
<path d="M913.7,349 L1049.4,636.5"/>
<path d="M917,347.6 L1052.8,635"/>
<path d="M974,326 L1109,613.5"/>
<path d="M977.9,324.5 L1112.9,612"/>
<path d="M1011.5,312.7 L1147,600.7"/>
</g>
</g>
<!-- csys -->
<g fill="none" stroke-width="1">
<path d="M774.500,555.900 L769,538.700" stroke="#30f030"/>
<path d="M774.500,555.900 L797.300,547.200" stroke="#f53030"/>
<path d="M774.500,555.900 L781.600,571.200" stroke="#30f8ff"/>
<circle cx="769" cy="538.700" r="2.600" fill="#30f030" stroke="none" shape-rendering="auto"/>
<circle cx="797.300" cy="547.200" r="2.100" fill="#f53030" stroke="none" shape-rendering="auto"/>
<circle cx="781.600" cy="571.200" r="2.900" fill="#30f8ff" stroke="none" shape-rendering="auto"/>
</g>
</svg>

<svg id="treeicons" class="abs" style="left:0;top:170px;z-index:5" width="320" height="500" viewBox="0 170 320 500">
<defs>
<linearGradient id="gfold" x1="0" y1="0" x2="1" y2="1"><stop offset="0" stop-color="#fffdf6"/><stop offset="1" stop-color="#fbdca0"/></linearGradient>
<linearGradient id="ghead" x1="0" y1="0" x2="0" y2="1"><stop offset="0" stop-color="#4d4f56"/><stop offset="1" stop-color="#a9abb3"/></linearGradient>
<linearGradient id="gwood" x1="0" y1="0" x2="1" y2="0"><stop offset="0" stop-color="#c99a46"/><stop offset=".45" stop-color="#f3dca0"/><stop offset="1" stop-color="#c08c34"/></linearGradient>
<linearGradient id="gwood2" x1="0" y1="0" x2="1" y2="0"><stop offset="0" stop-color="#b9801e"/><stop offset=".45" stop-color="#eec05a"/><stop offset="1" stop-color="#a8741a"/></linearGradient>
<linearGradient id="gdoc" x1="0" y1="0" x2="1" y2="1"><stop offset="0" stop-color="#ffffff"/><stop offset="1" stop-color="#cfe2ea"/></linearGradient>
</defs>
<!-- tree tab icons -->
<g fill="#fdfdfd" stroke="#333" stroke-width="1.2"><rect x="17.6" y="184.8" width="3.6" height="3.4"/><rect x="17.6" y="191.9" width="3.6" height="3.4"/><rect x="17.6" y="198.8" width="3.6" height="3.4"/><rect x="25.7" y="191.9" width="3.6" height="3.4"/><path d="M19.4,188.2 V191.9 M19.4,195.3 V198.8 M21.2,193.6 H25.7" fill="none" stroke-width="1"/></g>
<path d="M44,188.5 v-1.4 q0,-1.6 1.6,-1.6 h3.84 q1.2,0 1.6,1.2 l.4,1 h2.96 q1.2,0 1.2,1.2 v6.1 q0,1.200 -1.200,1.200 h-9.6 q-1.200,0 -1.200,-1.200 Z" fill="url(#gfold)" stroke="#cfa85a" stroke-width="1"/>
<path d="M47,192.5 v-1.4 q0,-1.6 1.6,-1.6 h3.84 q1.2,0 1.6,1.2 l.4,1 h2.96 q1.2,0 1.2,1.2 v6.1 q0,1.200 -1.200,1.200 h-9.6 q-1.200,0 -1.200,-1.200 Z" fill="url(#gfold)" stroke="#cfa85a" stroke-width="1"/>
<path d="M50.5,196.5 v-1.4 q0,-1.6 1.6,-1.6 h4 q1.2,0 1.6,1.2 l.4,1 h3.3 q1.2,0 1.2,1.2 v6.6 q0,1.200 -1.200,1.200 h-10.1 q-1.200,0 -1.200,-1.200 Z" fill="url(#gfold)" stroke="#cfa85a" stroke-width="1"/>
<path d="M74.3,190.5 v-1.4 q0,-1.6 1.6,-1.6 h5.28 q1.2,0 1.6,1.2 l.4,1 h6.02 q1.2,0 1.2,1.2 v10.6 q0,1.200 -1.200,1.200 h-14.1 q-1.200,0 -1.200,-1.200 Z" fill="url(#gfold)" stroke="#cfa85a" stroke-width="1"/>
<g stroke="#0b5c8c" stroke-width="1.1"><path d="M82.5,192.3 V199 M79.2,195.600 H85.800 M80.200,193.300 L84.800,197.900 M84.800,193.300 L80.200,197.900"/></g><circle cx="82.5" cy="195.600" r="1.100" fill="#fff7e0" stroke="#0b5c8c" stroke-width=".8"/>
<!-- header icons -->
<path d="M193,217.800 Q193.200,213.400 198.500,213.300 H203.500 L204,218.300 L202,216.800 H196.300 L194.300,218.600 Z" fill="url(#ghead)" stroke="#55585f" stroke-width=".5"/>
<rect x="196.300" y="217.400" width="5.600" height="15.400" rx="1.200" fill="url(#gwood)" stroke="#b58a3c" stroke-width=".6"/>
<rect x="206.300" y="213.400" width="1.700" height="11" fill="#6b6d78"/><rect x="205.200" y="224" width="3.800" height="8.600" rx="1" fill="url(#gwood2)" stroke="#a87a22" stroke-width=".5"/>
<path d="M236.500,213.500 H247.500 L251.500,217.500 V232.500 H236.500 Z" fill="url(#gdoc)" stroke="#8a8d92" stroke-width="1"/><path d="M247.500,213.500 V217.500 H251.500" fill="#cfe6f0" stroke="#8a8d92" stroke-width=".8"/>
<circle cx="240.400" cy="220.4" r="1" fill="#fff" stroke="#444" stroke-width=".7"/><path d="M243.200,220.4 H249" stroke="#444" stroke-width="1"/>
<circle cx="240.400" cy="224.4" r="1" fill="#fff" stroke="#444" stroke-width=".7"/><path d="M243.200,224.4 H249" stroke="#444" stroke-width="1"/>
<circle cx="240.400" cy="228.4" r="1" fill="#fff" stroke="#444" stroke-width=".7"/><path d="M243.200,228.4 H249" stroke="#444" stroke-width="1"/>
<g fill="#fdfdfd" stroke="#d0d0d0" stroke-width="1"><rect x="281.500" y="213.800" width="4" height="4"/><rect x="281.500" y="220.400" width="4" height="4"/><rect x="281.500" y="227.400" width="4" height="4"/><rect x="290" y="220.400" width="4" height="4"/><path d="M283.500,217.800 V220.400 M283.500,224.400 V227.400 M285.500,222.400 H290" fill="none"/><path d="M288,214.500 H290.500 V231 M292,214.500 H295 V220 M297,214.500 H299.500 V226" fill="none" stroke="#e2e2e2"/></g>
<ellipse cx="296" cy="228" rx="4.800" ry="2.800" fill="#c4c4c4"/><circle cx="296" cy="228" r="1.500" fill="#f4f4f4"/><path d="M290.500,223 L301,232.800" stroke="#555" stroke-width=".9"/>
<!-- row icons -->
<g stroke="#1b86b8" stroke-width="1" stroke-linejoin="round"><path d="M20.300,253 L23.300,250.300 H32.700 L30,253 Z" fill="#d3f0fb"/><path d="M30,253 L32.700,250.300 V259 L30,261.700 Z" fill="#4bb8e6"/><rect x="20.300" y="253" width="9.700" height="8.700" fill="#a9e1f7"/></g>
<g stroke="#7b5a1e" stroke-width="1.100" fill="none"><path d="M39.500,279.300 H50.700 M42.800,273.200 L49.600,287.600 M49.800,272.300 L43.300,285.400"/></g>
<g font-family="Liberation Sans,sans-serif" font-weight="700" font-size="6.500" fill="#222"><text x="39" y="276.200">y</text><text x="39" y="287.600">z</text><text x="51.600" y="281.800">x</text></g>
<path d="M39.700,307.8 L44,299.4 H53.500 L49.200,307.8 Z" fill="none" stroke="#7b5a1e" stroke-width="1.300" stroke-linejoin="miter"/>
<path d="M39.700,331.8 L44,323.4 H53.500 L49.200,331.8 Z" fill="none" stroke="#7b5a1e" stroke-width="1.300" stroke-linejoin="miter"/>
<path d="M39.700,355.8 L44,347.4 H53.500 L49.200,355.8 Z" fill="none" stroke="#7b5a1e" stroke-width="1.300" stroke-linejoin="miter"/>
<path d="M39.200,374.2 L45.800,368.1 H55 L48.800,374.2 Z" fill="#c4e6f3"/><path d="M48.800,374.2 L55,368.1 V377.3 L48.800,383.5 Z" fill="#68aacb"/><path d="M48.800,378.9 L55,375.3 V377.3 L48.800,383.5 Z" fill="#d3edf8"/><path d="M45.800,368.1 H55" stroke="#4d9dc4" stroke-width=".9"/><path d="M55,368.1 V377.3 L48.800,383.5" fill="none" stroke="#9fd0e6" stroke-width=".7"/><rect x="39.200" y="374.2" width="9.600" height="9.3" fill="#f3f3f3" stroke="#b4b4b4" stroke-width=".9"/>
<path d="M39.200,446.2 L45.800,440.1 H55 L48.800,446.2 Z" fill="#c4e6f3"/><path d="M48.800,446.2 L55,440.1 V449.3 L48.800,455.5 Z" fill="#68aacb"/><path d="M48.800,450.9 L55,447.3 V449.3 L48.800,455.5 Z" fill="#d3edf8"/><path d="M45.800,440.1 H55" stroke="#4d9dc4" stroke-width=".9"/><path d="M55,440.1 V449.3 L48.800,455.5" fill="none" stroke="#9fd0e6" stroke-width=".7"/><rect x="39.200" y="446.2" width="9.600" height="9.3" fill="#f3f3f3" stroke="#b4b4b4" stroke-width=".9"/>
<path d="M39.200,494.2 L45.800,488.1 H55 L48.800,494.2 Z" fill="#c4e6f3"/><path d="M48.800,494.2 L55,488.1 V497.3 L48.800,503.5 Z" fill="#68aacb"/><path d="M48.800,498.9 L55,495.3 V497.3 L48.800,503.5 Z" fill="#d3edf8"/><path d="M45.800,488.1 H55" stroke="#4d9dc4" stroke-width=".9"/><path d="M55,488.1 V497.3 L48.800,503.5" fill="none" stroke="#9fd0e6" stroke-width=".7"/><rect x="39.200" y="494.2" width="9.600" height="9.3" fill="#f3f3f3" stroke="#b4b4b4" stroke-width=".9"/>
<path d="M39.200,590.2 L45.800,584.1 H55 L48.800,590.2 Z" fill="#c4e6f3"/><path d="M48.800,590.2 L55,584.1 V593.3 L48.800,599.5 Z" fill="#68aacb"/><path d="M48.800,594.9 L55,591.3 V593.3 L48.800,599.5 Z" fill="#d3edf8"/><path d="M45.800,584.1 H55" stroke="#4d9dc4" stroke-width=".9"/><path d="M55,584.1 V593.3 L48.800,599.5" fill="none" stroke="#9fd0e6" stroke-width=".7"/><rect x="39.200" y="590.2" width="9.600" height="9.3" fill="#f3f3f3" stroke="#b4b4b4" stroke-width=".9"/>
<path d="M39.500,394.800 L42.500,392.500 H54 V405 L51,407.500 H39.500 Z" fill="#e6eaee" stroke="#b5b8bc" stroke-width=".8" stroke-linejoin="round"/><rect x="39.500" y="394.800" width="11.500" height="12.700" fill="#f2f2f2" stroke="#b5b8bc" stroke-width=".8"/><rect x="41.600" y="397.400" width="7.400" height="7.800" fill="#a9d9ee" stroke="#8f9ea6" stroke-width=".5"/><rect x="42.600" y="397.600" width="5.600" height="5.200" fill="#5ba3c6"/>
<path d="M39.200,417 L41.200,415.700 H48.500 L46.500,417 Z" fill="#d3f0fb" stroke="#1b86b8" stroke-width=".7"/><path d="M46.500,417 L48.500,415.700 V421 L46.500,423 Z" fill="#2d8fbd"/><rect x="39.200" y="417" width="7.300" height="11.600" fill="#a9e1f7"/><path d="M39.200,428.800 H45" stroke="#1b86b8" stroke-width="1"/>
<rect x="49.200" y="424.500" width="5.500" height="6.800" fill="#b9f096"/><path d="M44.300,424.300 L46.800,421.200 H54.700 L53,424.300 Z" fill="#ececec" stroke="#5aa83c" stroke-width="1.300" stroke-linejoin="round"/><path d="M50.800,424.800 V431.300 M53.200,424.800 V431.300" stroke="#2f6b1f" stroke-width="1" stroke-dasharray="1.600,.8"/><path d="M44.500,425 L43.300,426.500 L44.700,427.700 L43.300,429.200 L44.700,430.400 L43.500,431.600" fill="none" stroke="#2f6b1f" stroke-width=".9"/><circle cx="48.800" cy="422.700" r=".45" fill="#333"/><circle cx="50.800" cy="422.700" r=".45" fill="#333"/>
<path d="M40.200,463 H51 L54.700,467.500 V479.200 H42 L40.200,478 Z" fill="#ededed"/><path d="M40.200,463 H50.800 M54.800,468.500 H52.500 M42.500,479.300 H54.800" stroke="#6ab04a" stroke-width="1.400"/><path d="M40.300,464.500 V476.500 M54.600,470 V478.500" stroke="#9a9a9a" stroke-width=".8" stroke-dasharray=".9,1.100"/><path d="M42.500,476.600 L49.800,469.200" stroke="#2a4a2a" stroke-width="1" stroke-dasharray="1,1.300"/><circle cx="51" cy="468" r="1.600" fill="#bfe9fa" stroke="#0d78a8" stroke-width="1"/><circle cx="41" cy="478" r="1.600" fill="#bfe9fa" stroke="#0d78a8" stroke-width="1"/>
<path d="M41,514.500 H49.500 M47.300,511.800 L50,514.500 L47.300,517.200" fill="none" stroke="#222" stroke-width="1.100"/><rect x="39.200" y="517.600" width="9.500" height="2.200" fill="#8fd66c"/><rect x="39.200" y="519.800" width="9.500" height="1.600" fill="#9c9c9c"/><rect x="50.700" y="517.700" width="3.800" height="3.600" fill="none" stroke="#5aa83c" stroke-width="1" stroke-dasharray="1,1"/><rect x="51.600" y="523" width="3" height="4.800" fill="#e4e4e4" stroke="#5aa83c" stroke-width="1"/>
<path d="M44.500,549.3 L47,546 H55 L53,549.3 Z" fill="#e4e4e4" stroke="#8a8a8a" stroke-width=".8" stroke-linejoin="round"/><path d="M39.800,539.5 Q39.800,537.5 41.800,537.3 L45.500,536.8 V547 Q45.500,549 43.500,549.5 L41.500,549.8 Q39.800,549.8 39.800,548 Z" fill="#a9d694" stroke="#4d8c3c" stroke-width=".9"/><path d="M42.200,538.5 Q42.200,536.8 44,536.5 L50,535.6 V542.8 L42.200,544.6 Z" fill="#cdeefa" stroke="#0d78a8" stroke-width=".9" stroke-dasharray="1.300,.9"/>
<path d="M44.500,573.3 L47,570 H55 L53,573.3 Z" fill="#e4e4e4" stroke="#8a8a8a" stroke-width=".8" stroke-linejoin="round"/><path d="M39.800,563.5 Q39.800,561.5 41.800,561.3 L45.500,560.8 V571 Q45.500,573 43.500,573.5 L41.500,573.8 Q39.800,573.8 39.800,572 Z" fill="#a9d694" stroke="#4d8c3c" stroke-width=".9"/><path d="M42.200,562.5 Q42.200,560.8 44,560.5 L50,559.6 V566.8 L42.200,568.6 Z" fill="#cdeefa" stroke="#0d78a8" stroke-width=".9" stroke-dasharray="1.300,.9"/>
<path d="M42,614 H46.200 V610.200 L52.200,615.900 L46.200,621.800 V618 H42 Z" fill="#1f611f"/>
<path d="M42,614 H46.200 V610.200 L52.200,615.900 H42 Z" fill="#0d9a0d"/>
<path d="M46.400,610.400 L52,615.900 L46.400,621.600" fill="none" stroke="#b4e61e" stroke-width=".7"/>
<path d="M39.400,643.400 H45 L46.500,644.500 L48.300,643.400 H55 V646.600 H39.400 Z" fill="#d9f3cc" stroke="#2d6a1f" stroke-width=".9" stroke-linejoin="round"/>
<path d="M39.800,646.100 H54.600" stroke="#a9a9a9" stroke-width=".9"/>
<path d="M45.500,643.400 V634.500 H49" fill="none" stroke="#2d7a1f" stroke-width="1" stroke-dasharray="1.300,.8"/>
<path d="M48.300,635.500 V643.400" stroke="#9c9c9c" stroke-width="1" stroke-dasharray="1,1"/>
<path d="M50,636.200 Q53,636.800 54,639.600" fill="none" stroke="#555" stroke-width="1"/><path d="M52,640.500 H55 V637.300 Z" fill="#333"/>
<circle cx="63.500" cy="636.500" r="2.700" fill="#f4f400"/>
<g stroke="#333" stroke-width=".8"><path d="M63.500,632.600 V634.200 M63.500,638.800 V640.400 M59.800,636.500 H61.300 M65.700,636.500 H67.200 M60.700,633.700 L61.800,634.800 M65.200,638.200 L66.300,639.300 M66.300,633.700 L65.200,634.800 M61.800,638.200 L60.700,639.300"/></g>
</svg>
<div class="abs" id="status"></div>
<div class="abs pressed" style="left:10px;top:1010px;width:22px;height:22px;border-bottom:none"></div>
<div class="abs" style="left:36px;top:1010px;width:22px;height:22px;border:1px solid #cfd1d4;background:#f4f5f6"></div>
<div class="abs vsep" style="left:67px;top:1010px;height:22px"></div>
<div class="abs vsep" style="left:1301px;top:1004px;height:28px"></div>
<div class="abs vsep" style="left:1307px;top:1004px;height:28px"></div>
<div class="abs vsep" style="left:1353px;top:1004px;height:28px"></div>
<div class="abs vsep" style="left:1389px;top:1004px;height:28px"></div>
<div class="abs vsep" style="left:1430px;top:1004px;height:28px"></div>
<div class="abs vsep" style="left:1477px;top:1004px;height:28px"></div>
<div class="abs" style="left:1434px;top:1004px;width:40px;height:28px;border:1px solid #b4b6b8;border-radius:3px;background:linear-gradient(#fafafa,#efefef)"></div>
<div class="abs" style="left:1574px;top:1008px;width:176px;height:19px;border:1px solid #c9cdd2;background:linear-gradient(#f4f4f4,#fdfdfd)"></div>
<div class="abs" style="left:1731px;top:1009px;width:1px;height:17px;background:#d5d8db"></div>
<div class="abs" style="left:1737px;top:1016px;width:0;height:0;border-top:4px solid #888;border-left:4px solid transparent;border-right:4px solid transparent"></div>

<svg id="sticons" class="abs" style="left:0;top:996px;z-index:6" width="1772" height="44" viewBox="0 996 1772 44">
<defs>
<radialGradient id="gglobe" cx=".4" cy=".75" r=".8"><stop offset="0" stop-color="#d9f2fc"/><stop offset=".45" stop-color="#3fb2ea"/><stop offset="1" stop-color="#1a84c0"/></radialGradient>
<linearGradient id="gbino" x1="0" y1="0" x2="1" y2="0"><stop offset="0" stop-color="#111"/><stop offset=".5" stop-color="#8a8a8a"/><stop offset="1" stop-color="#111"/></linearGradient>
</defs>
<g fill="#fdfdfd" stroke="#333" stroke-width="1.200"><rect x="18.600" y="1013.600" width="3" height="2.900"/><rect x="18.600" y="1019.700" width="3" height="2.900"/><rect x="18.600" y="1025.600" width="3" height="2.900"/><rect x="25.600" y="1019.700" width="3" height="2.900"/><path d="M20.100,1016.500 V1019.700 M20.100,1022.600 V1025.600 M21.600,1021.200 H25.600" fill="none" stroke-width="1"/></g>
<circle cx="47.300" cy="1021.200" r="7" fill="url(#gglobe)"/>
<path d="M43.500,1017.500 Q46,1016 48,1017.300 Q47,1019.500 44.500,1020.500 Q42.800,1019.500 43.500,1017.500 Z M49,1019 Q52,1018.500 52.800,1021.500 Q52,1024.500 50,1025.500 Q49.500,1023 48.300,1021.500 Z M44,1022.500 Q46,1022.500 46.800,1025 Q46,1026.800 44.500,1026 Z" fill="#1f8fcf" opacity=".75"/>
<ellipse cx="47.300" cy="1021.200" rx="10.300" ry="4.200" transform="rotate(-41 47.300 1021.200)" fill="none" stroke="#444" stroke-width="1"/>
<path d="M1312.500,1014.800 L1315.500,1011.200 H1324.500 L1321.500,1014.800 H1326.300 L1323.300,1019.300 H1311.300 L1314.300,1014.800 Z" fill="#dcdcdc" stroke="#cfcfcf" stroke-width=".6"/>
<path d="M1313,1021 H1323.500 V1024.500 H1313 Z" fill="#e2e2e2" stroke="#cfcfcf" stroke-width=".6"/>
<circle cx="1364.700" cy="1017.100" r="5" fill="#c6c6c6"/><circle cx="1374.900" cy="1017.300" r="2.800" fill="#dddddd"/><circle cx="1381.900" cy="1017.300" r="2.800" fill="#dddddd"/>
<rect x="1396.300" y="1009.300" width="1.500" height="15.500" fill="#b4b4b4"/><path d="M1397.800,1009.300 L1407.400,1012.200 L1397.800,1016.800 Z" fill="#b0b0b0"/>
<path d="M1448.800,1011 H1452.300 V1013.500 L1453.300,1014.500 H1454.700 L1455.700,1013.500 V1011 H1459.200 V1013.500 L1462.300,1021 V1026 H1456.300 V1019.500 H1451.700 V1026 H1445.700 V1021 L1448.800,1013.500 Z" fill="url(#gbino)" stroke="#111" stroke-width=".4"/>
<path d="M1448.800,1013.300 H1452.300 M1455.700,1013.300 H1459.200" stroke="#ddd" stroke-width=".7"/>
</svg>
<div class="abs" style="left:1561px;top:973px;width:207px;height:63px;background:rgba(252,252,252,.38);z-index:7"></div>
<svg id="wmlogo" class="abs" style="left:1555px;top:970px;z-index:8" width="75" height="68" viewBox="1555 970 75 68">
<path d="M1577,1008 C1562,999 1559,982 1570,977.500 C1583,973 1604,990 1603.500,1006 C1603.400,1008 1602,1008.500 1601.500,1006 C1600,993 1583,980 1573,981.500 C1565,983 1566,997 1577,1008 Z" fill="#a9bccd" opacity=".9"/>
<path d="M1602,998 C1607,993 1617,991.500 1619,1001 C1621,1013 1610,1030 1598,1031.300 C1593,1031.500 1590,1027 1589.300,1021.800 C1591,1026 1594,1028 1598,1027.900 C1608,1026 1616,1014 1615,1004 C1614.500,997 1608,996 1602,998 Z" fill="#f0949b" opacity=".9"/>
<path d="M1577.500,1008 C1572,1010 1569.500,1016 1572,1020 C1575,1024 1584,1022 1588.600,1017.500 C1583,1020.500 1577,1021.500 1574.500,1018.500 C1572.500,1015.500 1574.500,1011 1577.500,1008 Z" fill="#c3cbd4" opacity=".85"/>
<path d="M1577.500,1008 Q1585,1004 1591,1007 M1577.500,1008 Q1584,1012 1590,1013.500 M1602,998 Q1597,1003 1593,1008" fill="none" stroke="#c9ced6" stroke-width=".7"/>
</svg>
<div class="abs" style="left:1630.500px;top:975px;width:125px;height:36px;line-height:36px;font-family:'Noto Serif CJK SC','Noto Sans CJK SC',serif;font-weight:900;font-size:27px;letter-spacing:3.200px;color:#93d8af;white-space:nowrap;z-index:8">野火论坛</div>
<div class="abs" style="left:1619px;top:1010px;width:150px;height:22px;line-height:22px;font-family:'Liberation Sans',sans-serif;font-size:16px;color:#c3e1e1;white-space:nowrap;z-index:8">www.proewildfire.cn</div>

</body>
</html>
